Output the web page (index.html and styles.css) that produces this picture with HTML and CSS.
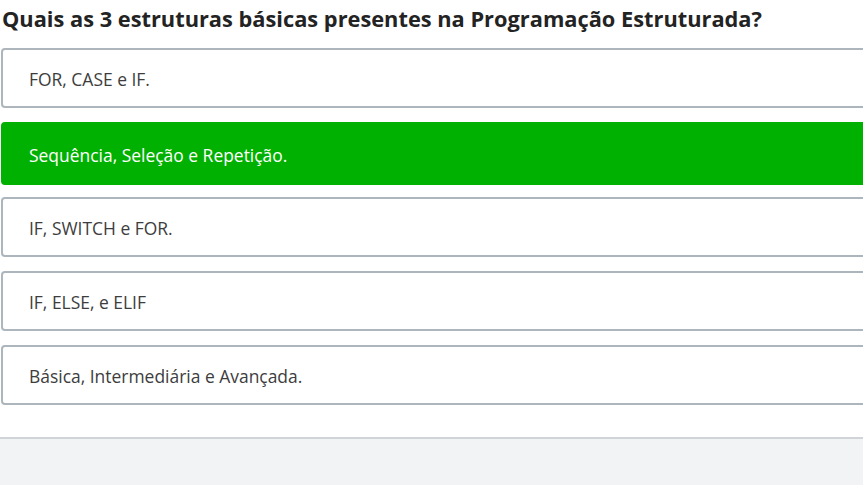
FILE: index.html
```html
<!DOCTYPE html>
<html lang="pt-BR">
<head>
<meta charset="utf-8">
<link rel="stylesheet" href="styles.css">
</head>
<body>
<div class="page">
  <h1 class="question">Quais as 3 estruturas básicas presentes na Programação Estruturada?</h1>
  <ul class="options">
    <li class="option">FOR, CASE e IF.</li>
    <li class="option option-correct">Sequência, Seleção e Repetição.</li>
    <li class="option">IF, SWITCH e FOR.</li>
    <li class="option">IF, ELSE, e ELIF</li>
    <li class="option">Básica, Intermediária e Avançada.</li>
  </ul>
  <div class="footer"></div>
</div>
</body>
</html>
```
FILE: styles.css
```css
html, body {
  margin: 0;
  padding: 0;
  background: #ffffff;
  overflow: hidden;
}
.page {
  font-family: "Open Sans", "Noto Sans", sans-serif;
  height: 485px;
  display: flex;
  flex-direction: column;
}
.question {
  margin: 0;
  padding: 4px 0 0 2px;
  height: 48px;
  box-sizing: border-box;
  font-size: 21.8px;
  font-weight: 700;
  color: #232323;
  line-height: 30px;
  white-space: nowrap;
}
.options {
  list-style: none;
  margin: 0 -12px 0 1px;
  padding: 0;
  display: flex;
  flex-direction: column;
  gap: 14px;
}
.option {
  height: 60px;
  flex: none;
  box-sizing: border-box;
  border: 2px solid #adb5bd;
  border-radius: 4px;
  padding: 2px 0 0 26px;
  display: flex;
  align-items: center;
  font-size: 17.45px;
  color: #3d3d3d;
  background: #ffffff;
}
.option-correct {
  background: #01b101;
  border-color: #01b101;
  color: #ffffff;
  height: 63px;
  margin-bottom: -2px;
}
.footer {
  margin-top: 32px;
  flex: 1;
  background: #f2f3f5;
  border-top: 2px solid #d0d3d8;
}
```
